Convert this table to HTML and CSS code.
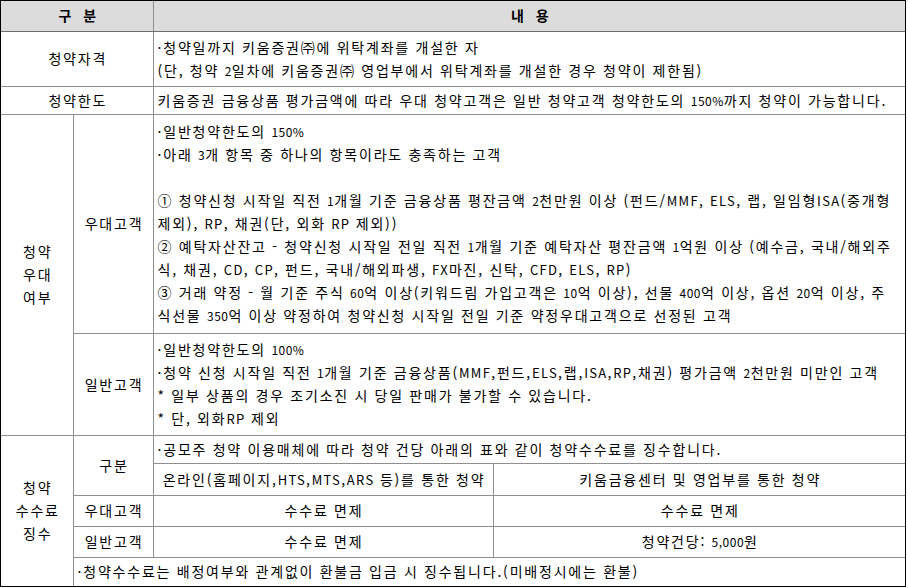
FILE: index.html
```html
<!DOCTYPE html>
<html lang="ko">
<head>
<meta charset="utf-8">
<title>청약 안내</title>
<link rel="stylesheet" href="styles.css">
</head>
<body>
<div class="frame">
<table class="info">
<colgroup><col class="c1"><col class="c2"><col class="c3"><col class="c4"></colgroup>
<thead>
<tr class="r-head"><th colspan="2">구 분</th><th colspan="2">내 용</th></tr>
</thead>
<tbody>
<tr class="r-qual"><td colspan="2" class="label">청약자격</td><td colspan="2" class="text">·청약일까지 키움증권㈜에 위탁계좌를 개설한 자<br>(단, 청약 <span class="num">2</span>일차에 키움증권㈜ 영업부에서 위탁계좌를 개설한 경우 청약이 제한됨)</td></tr>
<tr class="r-limit"><td colspan="2" class="label">청약한도</td><td colspan="2" class="text">키움증권 금융상품 평가금액에 따라 우대 청약고객은 일반 청약고객 청약한도의 <span class="num">150%</span>까지 청약이 가능합니다.</td></tr>
<tr class="r-pref"><td rowspan="2" class="label">청약<br>우대<br>여부</td><td class="label">우대고객</td><td colspan="2" class="text">·일반청약한도의 <span class="num">150%</span><br>·아래 <span class="num">3</span>개 항목 중 하나의 항목이라도 충족하는 고객<br><br>① 청약신청 시작일 직전 <span class="num">1</span>개월 기준 금융상품 평잔금액 <span class="num">2</span>천만원 이상 (펀드/<span class="en">MMF</span>, <span class="en">ELS</span>, 랩, 일임형<span class="en">ISA</span>(중개형<br>제외), <span class="en">RP</span>, 채권(단, 외화 <span class="en">RP</span> 제외))<br>② 예탁자산잔고 - 청약신청 시작일 전일 직전 <span class="num">1</span>개월 기준 예탁자산 평잔금액 <span class="num">1</span>억원 이상 (예수금, 국내/해외주<br>식, 채권, <span class="en">CD</span>, <span class="en">CP</span>, 펀드, 국내/해외파생, <span class="en">FX</span>마진, 신탁, <span class="en">CFD</span>, <span class="en">ELS</span>, <span class="en">RP</span>)<br>③ 거래 약정 - 월 기준 주식 <span class="num">60</span>억 이상(키워드림 가입고객은 <span class="num">10</span>억 이상), 선물 <span class="num">400</span>억 이상, 옵션 <span class="num">20</span>억 이상, 주<br>식선물 <span class="num">350</span>억 이상 약정하여 청약신청 시작일 전일 기준 약정우대고객으로 선정된 고객</td></tr>
<tr class="r-gen"><td class="label">일반고객</td><td colspan="2" class="text">·일반청약한도의 <span class="num">100%</span><br>·청약 신청 시작일 직전 <span class="num">1</span>개월 기준 금융상품(<span class="en">MMF</span>,펀드,<span class="en">ELS</span>,랩,<span class="en">ISA</span>,<span class="en">RP</span>,채권) 평가금액 <span class="num">2</span>천만원 미만인 고객<br>* 일부 상품의 경우 조기소진 시 당일 판매가 불가할 수 있습니다.<br>* 단, 외화<span class="en">RP</span> 제외</td></tr>
<tr class="r-f1"><td rowspan="5" class="label">청약<br>수수료<br>징수</td><td rowspan="2" class="label">구분</td><td colspan="2" class="text">·공모주 청약 이용매체에 따라 청약 건당 아래의 표와 같이 청약수수료를 징수합니다.</td></tr>
<tr class="r-f2"><td class="center">온라인(홈페이지,<span class="en">HTS</span>,<span class="en">MTS</span>,<span class="en">ARS</span> 등)를 통한 청약</td><td class="center">키움금융센터 및 영업부를 통한 청약</td></tr>
<tr class="r-f3"><td class="label">우대고객</td><td class="center">수수료 면제</td><td class="center">수수료 면제</td></tr>
<tr class="r-f4"><td class="label">일반고객</td><td class="center">수수료 면제</td><td class="center">청약건당: <span class="num">5,000</span>원</td></tr>
<tr class="r-f5"><td colspan="3" class="text">·청약수수료는 배정여부와 관계없이 환불금 입금 시 징수됩니다.(미배정시에는 환불)</td></tr>
</tbody>
</table>
</div>
</body>
</html>
```
FILE: styles.css
```css
html, body {
  margin: 0;
  padding: 0;
  background: #ffffff;
}
body {
  font-family: "Noto Sans CJK KR", "Noto Sans", sans-serif;
  font-size: 14px;
  color: #000000;
}
.frame {
  width: 904px;
  border: 1px solid #000000;
}
.info {
  width: 904px;
  border-collapse: collapse;
  border-style: hidden;
  table-layout: fixed;
  letter-spacing: 1.8px;
  word-spacing: -0.3px;
  line-height: 23px;
}
.c1 { width: 72px; }
.c2 { width: 80px; }
.c3 { width: 340px; }
.c4 { width: 412px; }
.info th,
.info td {
  border: 1px solid #8f8f8f;
  padding: 0 2px 0 4px;
  vertical-align: middle;
  white-space: nowrap;
  overflow: hidden;
}
.info th {
  background: #dcdcdc;
  font-weight: bold;
  font-size: 14px;
  text-align: center;
  letter-spacing: 1px;
  word-spacing: 6px;
  border-bottom-color: #707070;
}
.label { text-align: center; }
.center { text-align: center; }
.text { text-align: left; }
.num {
  font-size: 12px;
  letter-spacing: 0.5px;
}
.en {
  font-size: 13px;
  letter-spacing: 1.3px;
}
.r-head { height: 30px; }
.r-qual { height: 55px; }
.r-limit { height: 28px; }
.r-pref { height: 219px; }
.r-gen { height: 102px; }
.r-f1 { height: 28px; }
.r-f2 { height: 32px; }
.r-f3 { height: 31px; }
.r-f4 { height: 31px; }
.r-f5 { height: 29px; }
```
